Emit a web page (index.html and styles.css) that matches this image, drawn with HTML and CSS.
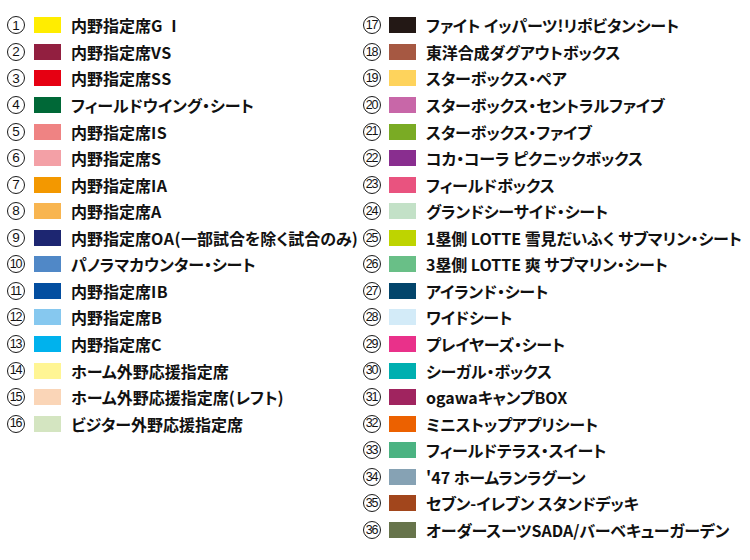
FILE: index.html
```html
<!DOCTYPE html>
<html lang="ja">
<head>
<meta charset="utf-8">
<link rel="stylesheet" href="styles.css">
</head>
<body>
<div class="legend">
  <ul class="col col-left">
    <li class="row"><span class="num">1</span><span class="sw c1"></span><span class="label">内野指定席<span class="en">G&nbsp;&nbsp;I</span></span></li>
    <li class="row"><span class="num">2</span><span class="sw c2"></span><span class="label">内野指定席<span class="en">VS</span></span></li>
    <li class="row"><span class="num">3</span><span class="sw c3"></span><span class="label">内野指定席<span class="en">SS</span></span></li>
    <li class="row"><span class="num">4</span><span class="sw c4"></span><span class="label">フィールドウイング・シート</span></li>
    <li class="row"><span class="num">5</span><span class="sw c5"></span><span class="label">内野指定席<span class="en">IS</span></span></li>
    <li class="row"><span class="num">6</span><span class="sw c6"></span><span class="label">内野指定席<span class="en">S</span></span></li>
    <li class="row"><span class="num">7</span><span class="sw c7"></span><span class="label">内野指定席<span class="en">IA</span></span></li>
    <li class="row"><span class="num">8</span><span class="sw c8"></span><span class="label">内野指定席<span class="en">A</span></span></li>
    <li class="row"><span class="num">9</span><span class="sw c9"></span><span class="label">内野指定席<span class="en">OA(</span>一部試合を除く試合のみ<span class="en">)</span></span></li>
    <li class="row"><span class="num two">10</span><span class="sw c10"></span><span class="label">パノラマカウンター・シート</span></li>
    <li class="row"><span class="num two">11</span><span class="sw c11"></span><span class="label">内野指定席<span class="en">IB</span></span></li>
    <li class="row"><span class="num two">12</span><span class="sw c12"></span><span class="label">内野指定席<span class="en">B</span></span></li>
    <li class="row"><span class="num two">13</span><span class="sw c13"></span><span class="label">内野指定席<span class="en">C</span></span></li>
    <li class="row"><span class="num two">14</span><span class="sw c14"></span><span class="label">ホーム外野応援指定席</span></li>
    <li class="row"><span class="num two">15</span><span class="sw c15"></span><span class="label">ホーム外野応援指定席<span class="en">(</span>レフト<span class="en">)</span></span></li>
    <li class="row"><span class="num two">16</span><span class="sw c16"></span><span class="label">ビジター外野応援指定席</span></li>
  </ul>
  <ul class="col col-right">
    <li class="row"><span class="num two">17</span><span class="sw c17"></span><span class="label">ファイト<span class="en"> </span>イッパーツ<span class="en">!</span>リポビタンシート</span></li>
    <li class="row"><span class="num two">18</span><span class="sw c18"></span><span class="label">東洋合成ダグアウトボックス</span></li>
    <li class="row"><span class="num two">19</span><span class="sw c19"></span><span class="label">スターボックス・ペア</span></li>
    <li class="row"><span class="num two">20</span><span class="sw c20"></span><span class="label">スターボックス・セントラルファイブ</span></li>
    <li class="row"><span class="num two">21</span><span class="sw c21"></span><span class="label">スターボックス・ファイブ</span></li>
    <li class="row"><span class="num two">22</span><span class="sw c22"></span><span class="label">コカ・コーラ<span class="en"> </span>ピクニックボックス</span></li>
    <li class="row"><span class="num two">23</span><span class="sw c23"></span><span class="label">フィールドボックス</span></li>
    <li class="row"><span class="num two">24</span><span class="sw c24"></span><span class="label">グランドシーサイド・シート</span></li>
    <li class="row"><span class="num two">25</span><span class="sw c25"></span><span class="label"><span class="en">1</span>塁側<span class="en"> LOTTE </span>雪見だいふく<span class="en"> </span>サブマリン・シート</span></li>
    <li class="row"><span class="num two">26</span><span class="sw c26"></span><span class="label"><span class="en">3</span>塁側<span class="en"> LOTTE </span>爽<span class="en"> </span>サブマリン・シート</span></li>
    <li class="row"><span class="num two">27</span><span class="sw c27"></span><span class="label">アイランド・シート</span></li>
    <li class="row"><span class="num two">28</span><span class="sw c28"></span><span class="label">ワイドシート</span></li>
    <li class="row"><span class="num two">29</span><span class="sw c29"></span><span class="label">プレイヤーズ・シート</span></li>
    <li class="row"><span class="num two">30</span><span class="sw c30"></span><span class="label">シーガル・ボックス</span></li>
    <li class="row"><span class="num two">31</span><span class="sw c31"></span><span class="label"><span class="en">ogawa</span>キャンプ<span class="en">BOX</span></span></li>
    <li class="row"><span class="num two">32</span><span class="sw c32"></span><span class="label">ミニストップアプリシート</span></li>
    <li class="row"><span class="num two">33</span><span class="sw c33"></span><span class="label">フィールドテラス・スイート</span></li>
    <li class="row"><span class="num two">34</span><span class="sw c34"></span><span class="label"><span class="en">'47 </span>ホームランラグーン</span></li>
    <li class="row"><span class="num two">35</span><span class="sw c35"></span><span class="label">セブン<span class="en">-</span>イレブン<span class="en"> </span>スタンドデッキ</span></li>
    <li class="row"><span class="num two">36</span><span class="sw c36"></span><span class="label">オーダースーツ<span class="en">SADA/</span>バーベキューガーデン</span></li>
  </ul>
</div>
</body>
</html>
```

FILE: styles.css
```css
html, body {
  margin: 0;
  padding: 0;
  background: #ffffff;
}
body {
  width: 750px;
  height: 560px;
  overflow: hidden;
  font-family: "Noto Sans CJK JP", "Noto Sans", sans-serif;
  color: #111111;
}
.legend {
  display: grid;
  grid-template-columns: 356px 1fr;
  padding: 12px 0 0 7px;
}
.col {
  list-style: none;
  margin: 0;
  padding: 0;
  display: flex;
  flex-direction: column;
}
.row {
  display: flex;
  align-items: center;
  height: 26.57px;
  white-space: nowrap;
}
.num {
  box-sizing: border-box;
  flex: none;
  width: 18px;
  height: 18px;
  border: 1.3px solid #1a1a1a;
  border-radius: 50%;
  display: flex;
  align-items: center;
  justify-content: center;
  font-family: "Liberation Sans", Arial, sans-serif;
  font-size: 13.5px;
  line-height: 1;
  font-weight: 400;
  color: #111;
}
.num.two {
  font-size: 12.5px;
  letter-spacing: -1.3px;
  padding-right: 1px;
}
.sw {
  width: 27px;
  height: 16px;
  margin-left: 9px;
  margin-right: 10px;
  flex: none;
}
.col-right .sw { margin-left: 8px; }
.label {
  font-size: 16px;
  font-weight: 700;
  font-feature-settings: "palt";
  letter-spacing: 0;
  line-height: 1;
}
.col-left .en {
  letter-spacing: 0.5px;
}
.col-right .label {
  letter-spacing: -0.15px;
}
.col-right .en {
  letter-spacing: 0;
}
.c1 { background: #ffed00; }
.c2 { background: #921f40; }
.c3 { background: #e60012; }
.c4 { background: #006837; }
.c5 { background: #ef8383; }
.c6 { background: #f3a0a6; }
.c7 { background: #f39800; }
.c8 { background: #f8b550; }
.c9 { background: #1d2671; }
.c10 { background: #5088c7; }
.c11 { background: #034ea0; }
.c12 { background: #86c8ef; }
.c13 { background: #00b2ed; }
.c14 { background: #fff594; }
.c15 { background: #fad5b7; }
.c16 { background: #d4e5c1; }
.c17 { background: #231815; }
.c18 { background: #a65842; }
.c19 { background: #fed35c; }
.c20 { background: #c867a8; }
.c21 { background: #7aab24; }
.c22 { background: #892e8f; }
.c23 { background: #e9537f; }
.c24 { background: #c3e1c7; }
.c25 { background: #bed400; }
.c26 { background: #69bf87; }
.c27 { background: #03456b; }
.c28 { background: #d3ebf8; }
.c29 { background: #e9318a; }
.c30 { background: #00afb0; }
.c31 { background: #a0245f; }
.c32 { background: #ec6100; }
.c33 { background: #4bb382; }
.c34 { background: #86a2b4; }
.c35 { background: #a2461c; }
.c36 { background: #67744b; }
```
